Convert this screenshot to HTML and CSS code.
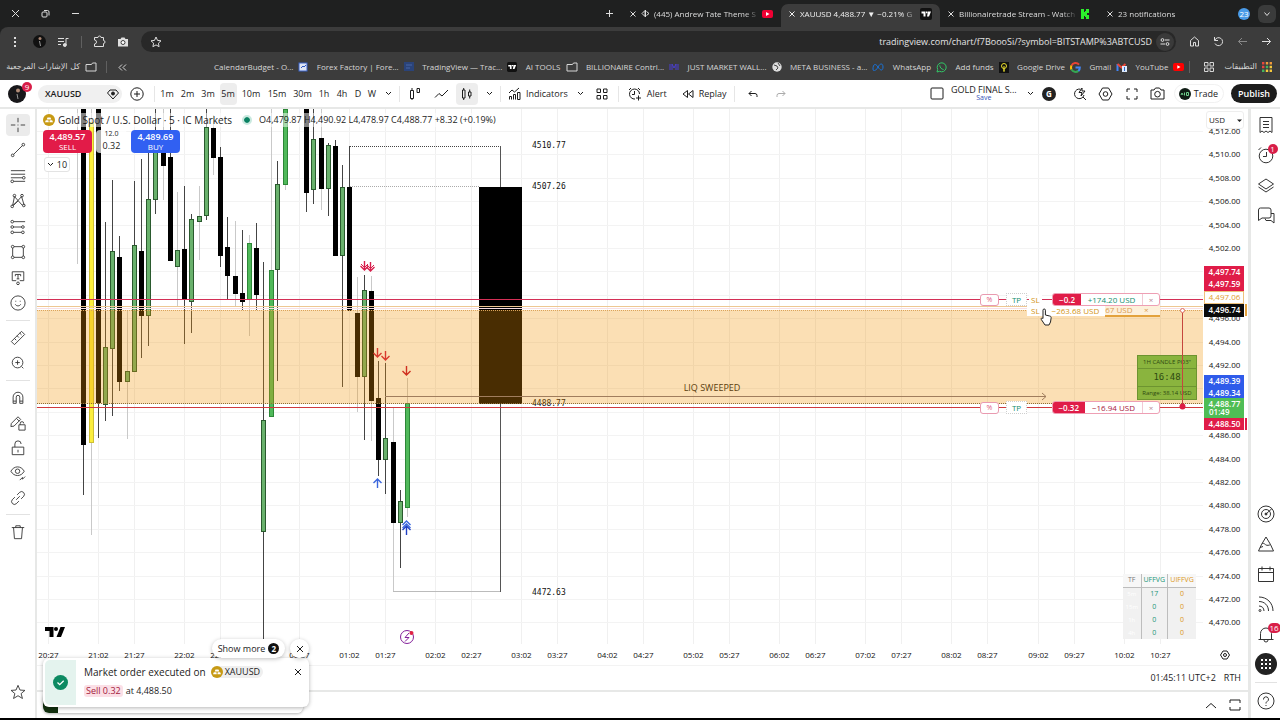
FILE: index.html
```html
<!DOCTYPE html>
<html lang="en">
<head>
<meta charset="utf-8">
<title>XAUUSD 4,488.77 ▼ −0.21% GOLD FINAL</title>
<link rel="stylesheet" href="styles.css">
</head>
<body>
<header class="browser">
  <div class="tabstrip">
    <div class="window-controls">
      <button aria-label="Close window"><svg width="9" height="9" viewBox="0 0 9 9"><path d="M1 1l7 7M8 1l-7 7"/></svg></button>
      <button aria-label="Restore window"><svg width="9" height="9" viewBox="0 0 9 9"><rect x="1" y="3" width="5" height="5" rx="1"/><path d="M3 1.500h3.500a1.500 1.500 0 0 1 1.500 1.500v3.500"/></svg></button>
      <button aria-label="Minimise window"><svg width="9" height="9" viewBox="0 0 9 9"><path d="M1 4.500h7"/></svg></button>
    </div>
    <button class="newtab" aria-label="New tab"><svg width="9" height="9" viewBox="0 0 9 9"><path d="M4.500 1v7M1 4.500h7"/></svg></button>
    <div class="tab">
      <button aria-label="Close tab"><svg width="8" height="8" viewBox="0 0 8 8"><path d="M1.500 1.500l5 5M6.500 1.500l-5 5"/></svg></button>
      <svg width="9" height="9" viewBox="0 0 9 9"><path d="M1 4.500l3-3v6zM5.500 2.500l2.500 2-2.500 2M4.500 1v7"/></svg>
      <span class="tab-title">(445) Andrew Tate Theme S</span>
      <svg width="12" height="10" viewBox="0 0 12 10"><rect x="1" y="1" width="11" height="8" rx="2" fill="#f00033" stroke="none"/><path d="M5 3l3.500 2L5 7z" fill="#fff" stroke="none"/></svg>
    </div>
    <div class="tab active">
      <button aria-label="Close tab"><svg width="8" height="8" viewBox="0 0 8 8"><path d="M1.500 1.500l5 5M6.500 1.500l-5 5"/></svg></button>
      <span class="tab-title">XAUUSD 4,488.77 ▼ −0.21% G</span>
      <svg width="12" height="12" viewBox="0 0 12 12"><rect width="12" height="12" rx="2" fill="#111" stroke="none"/><path d="M1.500 3.500h4v5h-2v-3h-2zM8 3.500h3l-2 5h-2zM6 3.500h1.500v1.700H6z" fill="#fff" stroke="none"/></svg>
    </div>
    <div class="tab">
      <button aria-label="Close tab"><svg width="8" height="8" viewBox="0 0 8 8"><path d="M1.500 1.500l5 5M6.500 1.500l-5 5"/></svg></button>
      <span class="tab-title">Billionairetrade Stream - Watch</span>
      <svg width="12" height="10" viewBox="0 0 12 10"><path d="M2 0h3v3h1V2h1V0h3v4H8v2h2v4H7V8H6V7H5v3H2z" fill="#2bf02b" stroke="none"/></svg>
    </div>
    <div class="tab">
      <button aria-label="Close tab"><svg width="8" height="8" viewBox="0 0 8 8"><path d="M1.500 1.500l5 5M6.500 1.500l-5 5"/></svg></button>
      <span class="tab-title">23 notifications</span>
      <span class="count">23</span>
    </div>
    <button class="tabsearch" aria-label="Search tabs"><svg width="8" height="8" viewBox="0 0 8 8"><path d="M1.500 2.500l2.500 3 2.500-3"/></svg></button>
  </div>

  <div class="navbar">
    <button class="u24" aria-label="Menu"><svg width="4" height="12" viewBox="0 0 4 12"><path d="M1 1h2v2H1zM1 5h2v2H1zM1 9h2v2H1z" fill="#ddd" stroke="none"/></svg></button>
    <button class="u24" aria-label="Profile"><svg width="13" height="13" viewBox="0 0 13 13"><circle cx="6.500" cy="6.500" r="6.500" fill="#111" stroke="none"/><circle cx="7" cy="3.500" r="1.500" fill="#a98572" stroke="none"/><path d="M6.500 6l1 5" stroke="#999"/></svg></button>
    <button class="u24" aria-label="Media"><svg width="12" height="12" viewBox="0 0 12 12"><path d="M1 2.500h6M1 5.500h6M1 8.500h3M9 9V2.500h2.500"/><circle cx="7.800" cy="9" r="1.500" fill="#ddd"/></svg></button>
    <i class="vsep"></i>
    <button class="u24" aria-label="Extensions"><svg width="13" height="13" viewBox="0 0 13 13"><path d="M1.500 2.500h3.500a1.500 1.500 0 0 1 3 0h2.500v3a1.500 1.500 0 0 1 0 3v3h-9v-2.500a2 2 0 0 0 0-4z"/></svg></button>
    <button class="u24" aria-label="Screenshot"><svg width="12" height="10" viewBox="0 0 12 10"><path d="M1 2h2.500l1-1.500h3l1 1.500H11v7.500H1z" fill="#e0e0e0" stroke="none"/><circle cx="6" cy="5.500" r="2" stroke="#3c3c3c" fill="#fff"/></svg></button>
    <div class="address">
      <button aria-label="Bookmark"><svg width="12" height="12" viewBox="0 0 12 12"><path d="M6 1l1.500 3.400 3.500.4-2.600 2.400.7 3.500L6 8.900l-3.100 1.800.7-3.500L1 4.800l3.500-.4z"/></svg></button>
      <input type="text" aria-label="Address" value="tradingview.com/chart/f7BoooSi/?symbol=BITSTAMP%3ABTCUSD">
      <button class="site" aria-label="Site settings"><svg width="10" height="10" viewBox="0 0 10 10"><circle cx="2.500" cy="3" r="1.400"/><path d="M5 3h4.500M.5 7H5"/><circle cx="7.500" cy="7" r="1.400"/></svg></button>
    </div>
    <button class="u24" aria-label="Home"><svg width="11" height="11" viewBox="0 0 11 11"><path d="M1.500 10V4.500l4-3.500 4 3.500V10h-3V6.500h-2V10z"/></svg></button>
    <button class="u24" aria-label="Reload"><svg width="11" height="11" viewBox="0 0 11 11"><path d="M1.500 1v3.500H5M1.800 4.300A4 4 0 1 1 2 7.500"/></svg></button>
    <button class="u24 dim" aria-label="Back"><svg width="11" height="11" viewBox="0 0 11 11"><path d="M10 5.500H1.500M5 2L1.500 5.500 5 9"/></svg></button>
    <button class="u24" aria-label="Forward"><svg width="11" height="11" viewBox="0 0 11 11"><path d="M1 5.500h8.500M6 2l3.500 3.500L6 9"/></svg></button>
  </div>

  <nav class="bookmarks">
    <a href="#" class="all-bookmarks" lang="ar" dir="rtl"><svg width="12" height="10" viewBox="0 0 12 10"><path d="M1 9h10V1H7.500L6.500 2.500H1z"/></svg>كل الإشارات المرجعية</a>
    <i class="vsep"></i>
    <button class="more" aria-label="More bookmarks"><svg width="9" height="7" viewBox="0 0 9 7"><path d="M4 .5l-3 3 3 3M8 .5l-3 3 3 3"/></svg></button>
    <div class="bookmark-list">
      <a href="#">CalendarBudget - O...<svg width="10" height="10" viewBox="0 0 10 10"><rect x="1" y="1" width="8" height="8" fill="#dfe6f5" stroke="#3a63c8"/><path d="M3 6l2-2 1 1 2-2" stroke="#2b56c0"/></svg></a>
      <a href="#">Forex Factory | Fore...<svg width="10" height="10" viewBox="0 0 10 10"><rect width="10" height="9" fill="#2a4379" stroke="none"/><path d="M2 3h6M2 6h4" stroke="#4967a5"/></svg></a>
      <a href="#">TradingView — Trac...<svg width="10" height="10" viewBox="0 0 12 12"><rect width="12" height="12" rx="2" fill="#111" stroke="none"/><path d="M1.500 3.500h4v5h-2v-3h-2zM8 3.500h3l-2 5h-2zM6 3.500h1.500v1.700H6z" fill="#fff" stroke="none"/></svg></a>
      <a href="#">AI TOOLS<svg width="12" height="10" viewBox="0 0 12 10"><path d="M1 9h10V1H7.500L6.500 2.500H1z"/></svg></a>
      <a href="#">BILLIONAIRE Contrl...<svg width="10" height="8" viewBox="0 0 10 8"><path d="M1 1v6M3 7V1l2 4 2-4v6M9 1v6" stroke="#4a3fd0"/></svg></a>
      <a href="#">JUST MARKET WALL...<svg width="10" height="10" viewBox="0 0 10 10"><circle cx="5" cy="5" r="4.700" fill="#ddd" stroke="none"/><path d="M2 3l3 1 1 2-2 2M6 1l2 3" stroke="#444"/></svg></a>
      <a href="#">META BUSINESS - a...<svg width="12" height="8" viewBox="0 0 12 8"><path d="M1 6C1 1 3.500 0 6 4s5 4 5 0S8 0 6 4 1 9 1 6z" stroke="#1a73d9"/></svg></a>
      <a href="#">WhatsApp<svg width="11" height="11" viewBox="0 0 11 11"><path d="M1 10l.7-2.600A4.500 4.500 0 1 1 3.600 9.300z" stroke="#32c666" /><path d="M3.800 3.300c0 2.200 1.700 4 3.800 4.200" stroke="#32c666"/></svg></a>
      <a href="#">Add funds<svg width="10" height="11" viewBox="0 0 10 11"><rect width="10" height="11" fill="#111" stroke="none"/><circle cx="5" cy="4" r="2.500" stroke="#e8dc2c"/><path d="M5 4v6M4 8h2" stroke="#e8dc2c"/></svg></a>
      <a href="#">Google Drive<svg width="11" height="11" viewBox="0 0 11 11"><path d="M9 2.600A4.500 4.500 0 0 0 1.500 3.600" stroke="#ea4335" stroke-width="2"/><path d="M1.500 3.500a4.500 4.500 0 0 0 0 4" stroke="#fbbc05" stroke-width="2"/><path d="M1.600 7.500a4.500 4.500 0 0 0 6.800 1.400" stroke="#34a853" stroke-width="2"/><path d="M8.400 8.900A4.500 4.500 0 0 0 9.800 5.500H5.500" stroke="#4285f4" stroke-width="2"/></svg></a>
      <a href="#">Gmail<svg width="11" height="10" viewBox="0 0 11 10"><path d="M1.500 9V2" stroke="#4285f4" stroke-width="2"/><path d="M1.500 2l4 3.500 4-3.500" stroke="#ea4335" stroke-width="2"/><rect x="6" y="4" width="5" height="6" fill="#dce9fb" stroke="none"/><path d="M8.500 5v4" stroke="#2b66c8"/></svg></a>
      <a href="#">YouTube<svg width="11" height="8" viewBox="0 0 11 8"><rect width="11" height="8" rx="2" fill="#f00" stroke="none"/><path d="M4.300 2.200L7.500 4 4.300 5.800z" fill="#fff" stroke="none"/></svg></a>
    </div>
    <i class="vsep"></i>
    <button class="u24" aria-label="Tab groups"><svg width="10" height="10" viewBox="0 0 10 10"><path d="M.5.500h3.500V4H.5zM6 .5h3.500V4H6zM.5 6h3.500v3.500H.5zM6 6h3.500v3.500H6z"/></svg></button>
    <a href="#" class="apps" lang="ar">التطبيقات<svg width="10" height="10" viewBox="0 0 10 10" stroke="none"><path d="M0 0h2.400v2.400H0zM0 3.800h2.400v2.400H0z" fill="#e8473c" stroke="none"/><path d="M3.800 0h2.400v2.400H3.800zM7.600 0H10v2.400H7.600z" fill="#ef9a3b" stroke="none"/><path d="M3.800 3.800h2.400v2.400H3.800zM0 7.600h2.400V10H0z" fill="#43b45c" stroke="none"/><path d="M7.600 3.800H10v2.400H7.600zM3.800 7.600h2.400V10H3.800zM7.600 7.600H10V10H7.600z" fill="#f5c93d" stroke="none"/></svg></a>
  </nav>
</header>

<div class="toolbar">
  <button class="account" aria-label="Account, 9 messages"><svg width="18" height="18" viewBox="0 0 18 18"><circle cx="9" cy="9" r="9" fill="#18171a" stroke="none"/><circle cx="10" cy="5.500" r="2" fill="#b38c78" stroke="none"/><path d="M9 9l1 5" stroke="#999"/></svg><span class="badge">9</span></button>
  <button class="symbol"><b>XAUUSD</b><svg width="12" height="12" viewBox="0 0 12 12"><path d="M3 2h6l2.500 3L6 11 .5 5z"/><circle cx="6" cy="5.500" r="1.500" fill="#222"/></svg></button>
  <button class="u30" aria-label="Compare"><svg width="14" height="14" viewBox="0 0 14 14"><circle cx="7" cy="7" r="6.200"/><path d="M7 4v6M4 7h6"/></svg></button>
  <i class="sep"></i>
  <button class="u20">1m</button><button class="u21">2m</button><button class="u20">3m</button><button class="u20 on"><span>5m</span></button><button class="u26">10m</button><button class="u26">15m</button><button class="u25">30m</button><button class="u18">1h</button><button class="u18">4h</button><button class="u14">D</button><button class="u14">W</button>
  <button class="u18" aria-label="Intervals"><svg width="7" height="5" viewBox="0 0 7 5"><path d="M1 1l2.500 2.500L6 1"/></svg></button>
  <i class="sep"></i>
  <button class="u26" aria-label="Bar count"><svg width="12" height="14" viewBox="0 0 12 14"><path d="M1.500 3.500h3v8h-3zM3 1v2.500M3 11.500V13M8 1.500h2.500v4H8z"/></svg></button>
  <button class="u26" aria-label="Line chart"><svg width="15" height="10" viewBox="0 0 15 10"><path d="M1 8.500l4-4 3 2.500 6-6"/></svg></button>
  <button class="u26 on" aria-label="Candles"><span><svg width="12" height="14" viewBox="0 0 12 14"><path d="M1.500 3h2.500v8H1.500zM2.700 1v2M2.700 11v2M7.500 5h2.500v4H7.500zM8.700 2.500V5M8.700 9v2.500"/></svg></span></button>
  <button class="u18" aria-label="Chart types"><svg width="7" height="5" viewBox="0 0 7 5"><path d="M1 1l2.500 2.500L6 1"/></svg></button>
  <i class="sep"></i>
  <button class="labelled ind"><svg width="13" height="13" viewBox="0 0 13 13"><path d="M1.500 12.500v-3h2v3M5.500 12.500v-5h2v5M9.500 12.500v-7h2.500v7zM1 6l3-3 2.500 2L11 1"/></svg>Indicators</button>
  <button class="u25" aria-label="Favorites"><svg width="7" height="5" viewBox="0 0 7 5"><path d="M1 1l2.500 2.500L6 1"/></svg></button>
  <button class="u18" aria-label="Templates"><svg width="12" height="12" viewBox="0 0 12 12"><path d="M1 1h3.500v3.500H1zM7.500 1H11v3.500H7.500zM1 7.500h3.500V11H1zM7.500 7.500H11V11H7.500z"/></svg></button>
  <i class="sep wide"></i>
  <button class="labelled"><svg width="14" height="14" viewBox="0 0 14 14"><path d="M11.500 7A5 5 0 1 0 7 12M6.500 4v3.500H4M1 3l2-2M10 1l2 2M10.500 8.500v5M8 11h5"/></svg>Alert</button>
  <button class="labelled replay"><svg width="12" height="10" viewBox="0 0 12 10"><path d="M5.500 1.500v7L1 5zM11 1.500v7L6.500 5z"/></svg>Replay</button>
  <i class="sep wide"></i>
  <button class="u28" aria-label="Undo"><svg width="10" height="8" viewBox="0 0 10 8"><path d="M3.500 1L1 3.500 3.500 6M1 3.500h6a2 2 0 0 1 2 2V7"/></svg></button>
  <button class="u28 faded" aria-label="Redo"><svg width="10" height="8" viewBox="0 0 10 8"><path d="M6.500 1L9 3.500 6.500 6M9 3.500H3a2 2 0 0 0-2 2V7"/></svg></button>
  <div class="grow"></div>
  <button class="u20" aria-label="Layout"><svg width="14" height="13" viewBox="0 0 14 13"><rect x="1" y="1" width="12" height="11" rx="1"/></svg></button>
  <button class="layout-name"><span>GOLD FINAL S...</span><small>Save</small></button>
  <button class="u20" aria-label="Layouts"><svg width="7" height="5" viewBox="0 0 7 5"><path d="M1 1l2.500 2.500L6 1"/></svg></button>
  <span class="gcircle">G</span>
  <button class="u26" aria-label="Quick search"><svg width="14" height="14" viewBox="0 0 14 14"><path d="M7.500 2.200A4.800 4.800 0 1 0 11 8M10 10l3 3M9 1L6 5.500h3L8 9l4-5H9z"/></svg></button>
  <button class="u26" aria-label="Settings"><svg width="15" height="14" viewBox="0 0 15 14"><path d="M4.500 1h6L14 7l-3.500 6h-6L1 7z"/><circle cx="7.500" cy="7" r="2.300"/></svg></button>
  <button class="u26" aria-label="Fullscreen"><svg width="12" height="12" viewBox="0 0 12 12"><path d="M1 4V1h3M8 1h3v3M11 8v3H8M4 11H1V8"/></svg></button>
  <button class="u25" aria-label="Snapshot"><svg width="15" height="13" viewBox="0 0 15 13"><path d="M1 3h3l1.500-2h4L11 3h3v9H1z"/><circle cx="7.500" cy="7.200" r="2.800"/></svg></button>
  <button class="trade"><svg width="12" height="12" viewBox="0 0 12 12"><circle cx="6" cy="6" r="6" fill="#101d15" stroke="none"/><path d="M2 7l1-2 1 2M5.500 4.500v3M7.500 4.500h2v3h-2z" stroke="#6fd08c"/></svg>Trade</button>
  <button class="publish">Publish</button>
</div>

<div class="workspace">
  <aside class="tools">
    <div class="group g8">
      <button class="on" aria-label="Cross"><svg viewBox="0 0 18 18"><path d="M9 1v5M9 12v5M1 9h5M12 9h5M8.500 9h1"/></svg></button>
      <button aria-label="Trend line"><svg viewBox="0 0 18 18"><path d="M4 14L14 4"/><circle cx="3" cy="15" r="1.500"/><circle cx="15" cy="3" r="1.500"/></svg></button>
      <button aria-label="Fib"><svg viewBox="0 0 18 18"><path d="M1 3h16M1 7h16M1 11h13M4 15h13"/><circle cx="15.500" cy="11" r="1.500"/><circle cx="2.500" cy="15" r="1.500"/></svg></button>
      <button aria-label="Patterns"><svg viewBox="0 0 18 18"><path d="M3 14L5 4l9 10M4 14l9-10 3 10M3 14l6-5"/><circle cx="2.500" cy="15" r="1.500"/><circle cx="5" cy="3" r="1.500"/><circle cx="13.500" cy="3" r="1.500"/><circle cx="15.500" cy="14" r="1.500"/></svg></button>
      <button aria-label="Forecast"><svg viewBox="0 0 18 18"><path d="M4 3h13M4 9h9M4 15h9"/><circle cx="2.500" cy="3" r="1.500"/><circle cx="2.500" cy="9" r="1.500"/><circle cx="2.500" cy="15" r="1.500"/><circle cx="14.500" cy="9" r="1.500"/><circle cx="14.500" cy="15" r="1.500"/></svg></button>
      <button aria-label="Shapes"><svg viewBox="0 0 18 18"><path d="M4.500 3h9M4.500 15h9M3 4.500v9M15 4.500v9"/><circle cx="3" cy="3" r="1.500"/><circle cx="15" cy="3" r="1.500"/><circle cx="3" cy="15" r="1.500"/><circle cx="15" cy="15" r="1.500"/></svg></button>
      <button aria-label="Text"><svg viewBox="0 0 18 18"><path d="M7 12H2.500V2h13v10H11M6 7V5h6v2M9 5v5M7.500 10h3"/><circle cx="9" cy="15" r="1.500"/></svg></button>
      <button aria-label="Emoji"><svg viewBox="0 0 18 18"><circle cx="9" cy="9" r="8"/><path d="M6 10.500c1 2.300 5 2.300 6 0M6.500 6.500v1M11.500 6.500v1"/></svg></button>
    </div>
    <hr>
    <div class="group g2">
      <button aria-label="Measure"><svg viewBox="0 0 18 18"><path d="M1.500 13L13 1.500 16.500 5 5 16.500zM5 9.500l2 2M8 6.500l2 2M11 3.500l2 2"/></svg></button>
      <button aria-label="Zoom"><svg viewBox="0 0 18 18"><circle cx="8.500" cy="8.500" r="6"/><path d="M13 13l2 2M8.500 6v5M6 8.500h5"/></svg></button>
    </div>
    <hr>
    <div class="group g5">
      <button aria-label="Magnet"><svg viewBox="0 0 18 18"><path d="M3.500 15V8a5.500 5.500 0 0 1 11 0v7h-3.500V8a2 2 0 0 0-4 0v7zM3.500 12.500H7M11 12.500h3.500"/></svg></button>
      <button aria-label="Lock drawing mode"><svg viewBox="0 0 18 18"><path d="M1 13l.5-3.500L9 2l3 3-7.500 7.500zM7.500 4l3 3M10 11h7v6h-7zM11.500 11V9.500a2 2 0 0 1 4 0"/></svg></button>
      <button aria-label="Lock all"><svg viewBox="0 0 18 18"><path d="M2.500 8h13v8.500h-13zM5.500 8V4.500a3.500 3.500 0 0 1 7 0M9 11v3"/></svg></button>
      <button aria-label="Hide all"><svg viewBox="0 0 18 18"><path d="M1 7c3.500-6.500 11.500-6.500 15 0-3.500 6.500-11.500 6.500-15 0zM11 17l3-3v2l3-3"/><circle cx="8.500" cy="7" r="2.500"/></svg></button>
      <button aria-label="Link"><svg viewBox="0 0 18 18"><path d="M7 11l4-4M8 5.500l3-3a3.200 3.200 0 0 1 4.500 4.500L12.500 10M10 12.500l-3 3A3.200 3.200 0 0 1 2.500 11L5.500 8"/></svg></button>
    </div>
    <hr>
    <div class="group g1">
      <button aria-label="Remove"><svg viewBox="0 0 18 18"><path d="M2 4h14M6.500 4V2h5v2M4 4l1 12.500h8L14 4"/></svg></button>
    </div>
    <div class="group g1 last">
      <button aria-label="Favourite tools"><svg viewBox="0 0 18 18"><path d="M9 1.500l2.200 5.300 5.600.4-4.300 3.600 1.500 5.500L9 13.200 4 16.300l1.500-5.500L1.200 7.200l5.600-.4z"/></svg></button>
    </div>
  </aside>

  <main class="center">
    <section class="chart-panel">
      <div class="chart-row">
        <div class="plot">
          <svg class="canvas" id="plot" role="img" aria-label="Gold spot price chart"></svg>
          <div class="legend">
            <svg width="12" height="12" viewBox="0 0 12 12"><circle cx="6" cy="6" r="6" fill="#c79a14"/><path d="M4.500 3.500h3l.8 2H3.700zM2.800 6.300h2.600l.4 2H2zM6.800 6.300h2.400l.8 2H6.400z" fill="#fff"/></svg>
            <h1>Gold Spot / U.S. Dollar · 5 · IC Markets</h1>
            <i class="live"></i>
            <p>O4,479.87 H4,490.92 L4,478.97 C4,488.77 +8.32 (+0.19%)</p>
          </div>
          <div class="deal">
            <button class="sell"><b>4,489.57</b>SELL</button>
            <div class="qty"><small>12.0</small><span>0.32</span></div>
            <button class="buy"><b>4,489.69</b>BUY</button>
          </div>
          <button class="collapse"><svg width="7" height="5" viewBox="0 0 7 5"><path d="M1 1l2.500 2.500L6 1"/></svg>10</button>

          <div class="order second"><span class="sl">SL</span><span class="loss">−263.68 USD</span><span class="under">67 USD</span><span class="under">×</span></div>
          <div class="order first">
            <button class="pct">%</button><button class="tp">TP</button><span class="sl">SL</span>
            <div class="pos"><b>−0.2</b><span class="gain">+174.20 USD</span><button aria-label="Close position">×</button></div>
          </div>
          <div class="order third">
            <button class="pct">%</button><button class="tp">TP</button>
            <div class="pos"><b>−0.32</b><span class="neg">−16.94 USD</span><button aria-label="Close position">×</button></div>
          </div>
          <div class="po3"><span>1H CANDLE PO3"</span><strong>16:48</strong><span>Range: 38.14 USD</span></div>
          <svg class="bracket" width="9" height="102" viewBox="0 0 9 102"><path d="M4.500 5v92" stroke="#c5463d"/><circle cx="4.500" cy="2.500" r="2" fill="#fff" stroke="#dc6f63"/><circle cx="4.500" cy="98.500" r="3" fill="#dd1e45"/></svg>
          <svg class="cursor" width="12" height="18" viewBox="0 0 12 18"><path d="M3 10.500V2.200a1.200 1.200 0 0 1 2.400 0V7l4.300 1c1.200.3 1.600 1 1.400 2.200L10.500 14 9 17H5L1.300 11.500c-.6-1.200.6-2 1.700-1z" fill="#fff" stroke="#222"/></svg>
          <table class="ffvg">
            <tr><th>TF</th><th class="g">UFFVG</th><th class="o">UIFFVG</th></tr>
            <tr><td class="tf">5m</td><td class="g">17</td><td class="o">0</td></tr>
            <tr><td class="tf">15m</td><td class="g">0</td><td class="o">0</td></tr>
            <tr><td class="tf">1h</td><td class="g">0</td><td class="o">0</td></tr>
            <tr><td class="tf">4h</td><td class="g">0</td><td class="o">0</td></tr>
          </table>
          <svg class="tvlogo" width="20" height="10" viewBox="0 0 20 10"><path d="M0 0h8.500v10H4.500V4H0zM15.500 0H20l-4 10h-4.500z"/><circle cx="11" cy="2" r="2"/></svg>
        </div>
        <div class="price-axis">
          <svg class="canvas" id="prices" role="img" aria-label="Price axis"></svg>
          <select aria-label="Currency"><option>USD</option></select>
          <svg class="caret" width="5" height="4" viewBox="0 0 5 4"><path d="M0 .5h5L2.500 3z" fill="#222" stroke="none"/></svg>
        </div>
      </div>
      <div class="time-row">
        <svg class="canvas" id="times" role="img" aria-label="Time axis"></svg>
        <button aria-label="Axis settings"><svg width="10" height="10" viewBox="0 0 10 10"><path d="M3 1h4l2.500 4L7 9H3L.5 5z"/><circle cx="5" cy="5" r="1.500"/></svg></button>
      </div>
      <div class="status"><span>01:45:11 UTC+2</span><span>RTH</span></div>
    </section>
    <footer class="bottom">
      <button aria-label="Open panel"><svg width="12" height="7" viewBox="0 0 12 7"><path d="M1 6l5-4.500L11 6"/></svg></button>
      <button aria-label="Maximise panel"><svg width="12" height="12" viewBox="0 0 12 12"><path d="M1 4V1h3M8 1h3v3M11 8v3H8M4 11H1V8M4 1h4M4 11h4" /></svg></button>
    </footer>
    <div class="toast-wrap">
      <div class="toast-actions"><button class="show">Show more <b>2</b></button><button class="dismiss" aria-label="Dismiss all"><svg width="8" height="8" viewBox="0 0 8 8"><path d="M1 1l6 6M7 1L1 7"/></svg></button></div>
      <div class="stacked"></div>
      <div class="toast">
        <div class="mark"><svg width="15" height="15" viewBox="0 0 15 15"><circle cx="7.500" cy="7.500" r="7.500" fill="#0d8a62"/><path d="M4.500 7.500l2.200 2.200 4-4" stroke="#fff" stroke-width="1.300" fill="none"/></svg></div>
        <div class="msg">
          <p>Market order executed on <span class="chip"><svg width="12" height="12" viewBox="0 0 12 12"><circle cx="6" cy="6" r="6" fill="#c79a14"/><path d="M4.500 3.500h3l.8 2H3.700zM2.800 6.300h2.600l.4 2H2zM6.800 6.300h2.400l.8 2H6.400z" fill="#fff"/></svg>XAUUSD</span></p>
          <p class="detail"><span class="side">Sell 0.32</span> at 4,488.50</p>
        </div>
        <button aria-label="Close notification"><svg width="8" height="8" viewBox="0 0 8 8"><path d="M1 1l6 6M7 1L1 7"/></svg></button>
      </div>
    </div>
  </main>

  <aside class="widgets">
    <button aria-label="Watchlist"><svg viewBox="0 0 18 18"><path d="M3 1.500h12v15l-2-1.500-2 1.500L9 15l-2 1.500L5 15l-2 1.500zM6 5.500h6M6 8.500h6M6 11.500h6"/></svg></button>
    <button aria-label="Alerts"><svg viewBox="0 0 18 18"><circle cx="9" cy="10" r="6.800"/><path d="M9.500 6v4.500H6M1.500 4L4 1.500M14 1.500L16.500 4"/></svg><span class="badge">1</span></button>
    <button aria-label="Object tree"><svg viewBox="0 0 18 18"><path d="M1.500 8L9 3l7.500 5L9 13zM1.500 11L9 16l7.500-5"/></svg></button>
    <button aria-label="Chats"><svg viewBox="0 0 18 18"><path d="M1.500 14.500V4a2 2 0 0 1 2-2h8.500a2 2 0 0 1 2 2v6a2 2 0 0 1-2 2H5zM8 12.500l1 2h5l3 2.500V7.500h-3"/></svg></button>
    <div class="grow"></div>
    <button aria-label="Screener"><svg viewBox="0 0 18 18"><circle cx="9" cy="9" r="8"/><circle cx="9" cy="9" r="4.500"/><circle cx="9" cy="9" r="1" fill="#222"/><path d="M9 9l6-5.500"/></svg></button>
    <button aria-label="Pine"><svg viewBox="0 0 18 18"><path d="M9 2l4.500 7.500L16.500 16h-15l3-6.500zM4.500 9.500c2-2.500 3.500 0 4.500.5s3 .5 4.500-.5M3 12.500l3-1"/></svg></button>
    <button aria-label="Calendar"><svg viewBox="0 0 18 18"><path d="M1.500 3.500h15v13h-15zM1.500 7.500h15M5 1.500v4M13 1.500v4"/></svg></button>
    <button aria-label="News"><svg viewBox="0 0 18 18"><path d="M2 2c8 0 14 6 14 14M2 6.500c5.500 0 9.500 4 9.500 9.500M2 11c3 0 5 2 5 5"/><circle cx="3" cy="15.500" r="1"/></svg></button>
    <button aria-label="Notifications"><svg viewBox="0 0 18 18"><path d="M1.500 14.500h15M3.500 14.500V8.500a5.500 5.500 0 0 1 11 0v6M7 15a2 2 0 0 0 4 0"/></svg><span class="badge">16</span></button>
    <button class="products" aria-label="Products"><svg viewBox="0 0 22 22"><circle cx="11" cy="11" r="11" fill="#222" stroke="none"/><path d="M5.500 5.500h3v3h-3zM9.500 5.500h3v3h-3zM13.500 5.500h3v3h-3zM5.500 9.500h3v3h-3zM9.500 9.500h3v3h-3zM13.500 9.500h3v3h-3zM5.500 13.500h3v3h-3zM9.500 13.500h3v3h-3zM13.500 13.500h3v3h-3z" fill="#fff" stroke="#222"/></svg></button>
    <hr>
    <button aria-label="Help"><svg viewBox="0 0 18 18"><circle cx="9" cy="9" r="8"/><path d="M6.500 7.500a2.500 2.500 0 1 1 3.700 2C9.300 10 9 10.500 9 11.500M9 13v1"/></svg></button>
  </aside>
</div>
<script src="chart.js"></script>
</body>
</html>
```
FILE: styles.css
```css
* { box-sizing: border-box; }
body {
  margin: 0;
  min-height: 100vh;
  display: flex;
  flex-direction: column;
  font-family: "Open Sans", "Noto Sans", sans-serif;
  font-size: 9px;
  line-height: 12px;
  color: #1c1c1c;
  background: #e7e8e7;
  border-bottom: 2px solid #000;
}
h1, p { margin: 0; font: inherit; }
button, input, select { font: inherit; color: inherit; border: 0; padding: 0; background: none; }
button { display: flex; align-items: center; justify-content: center; flex: none; white-space: nowrap; }
a { color: inherit; text-decoration: none; }
svg { flex: none; fill: none; stroke: currentColor; }
hr { border: 0; height: 1px; background: #e2e2e2; }
.grow { flex: 1; }
.u14 { width: 14px; }
.u18 { width: 18px; }
.u20 { width: 20px; }
.u21 { width: 21px; }
.u24 { width: 24px; }
.u25 { width: 25px; }
.u26 { width: 26px; }
.u28 { width: 28px; }
.u30 { width: 30px; }

/* Browser frame */
.browser { background: #1f2020; color: #dedede; }
.tabstrip { display: flex; align-items: stretch; height: 27px; padding-right: 4px; }
.window-controls { display: flex; flex: 1; }
.window-controls button { width: 30px; }
.newtab { width: 26px; }
.tab { width: 159px; display: flex; align-items: center; gap: 4px; padding: 0 8px 0 7px; flex: none; }
.tab.active { background: #3c3c3c; border-radius: 7px 7px 0 0; margin-top: 4px; padding-bottom: 4px; color: #f0f0f0; }
.tab-title { flex: 1; white-space: nowrap; font-size: 8px; mask-image: linear-gradient(to right, #000 88%, rgba(0, 0, 0, .2)); }
.count { width: 12px; height: 12px; border-radius: 6px; background: #4a9be8; color: #fff; font-size: 8px; line-height: 12px; text-align: center; }
.tabsearch { width: 18px; height: 18px; border-radius: 6px; background: #3a3b3b; margin-top: 5px; }
.navbar { display: flex; align-items: center; height: 27px; padding: 2px 2px 0 3px; background: #3c3c3c; border-radius: 8px 0 0 0; }
.vsep { width: 1px; height: 12px; background: #606060; flex: none; }
.navbar .vsep { margin: 0 5px 0 6px; }
.address { flex: 1; display: flex; align-items: center; height: 21px; margin: 0 6px; padding: 0 2px 0 9px; border-radius: 11px; background: #282828; }
.address input { flex: 1; min-width: 0; text-align: right; color: #e4e4e4; padding-right: 4px; }
.site { width: 18px; height: 18px; border-radius: 9px; background: #3a3a3a; }
.dim { color: #888; }
.bookmarks { display: flex; align-items: center; height: 26px; padding: 0 8px 0 10px; background: #3c3c3c; font-size: 8px; color: #d6d6d6; white-space: nowrap; }
.bookmarks a { display: flex; align-items: center; gap: 5px; }
.all-bookmarks, .apps { font-family: "DejaVu Sans", sans-serif; }
.all-bookmarks { width: 87px; }
.bookmarks .vsep { margin: 0 9px; }
.more { width: 12px; margin-right: 86px; }
.bookmark-list { display: flex; flex: 1; justify-content: space-between; }
.bookmark-list + .vsep { margin: 0 7px 0 4px; }
.bookmarks .u24 { margin-right: 4px; }

/* Chart toolbar */
.toolbar { display: flex; align-items: stretch; height: 27px; padding: 0 3px 0 8px; background: #fff; }
.badge { position: absolute; min-width: 10px; height: 10px; padding: 0 2px; border-radius: 5px; background: #d81e48; color: #fff; font-size: 8px; line-height: 10px; text-align: center; }
.account { position: relative; width: 18px; }
.account .badge { left: 14px; top: 2px; }
.symbol { width: 84px; height: 18px; margin: 5px 0 0 12px; padding: 0 3px 0 7px; border-radius: 9px; background: #f0f0f0; justify-content: space-between; }
.symbol b { font-weight: 600; }
.sep { width: 1px; height: 16px; margin: 6px 2px 0; background: #e6e6e6; flex: none; }
.sep.wide { margin: 6px 9px 0 7px; }
.replay + .sep.wide { margin-right: 4px; }
.on span { display: flex; align-items: center; justify-content: center; width: 100%; height: 22px; border-radius: 4px; background: #ededed; }
.on.u20 span { width: 17px; }
.on.u26 span { width: 22px; }
.labelled { gap: 5px; }
.ind { margin-left: 5px; }
.replay { margin-left: 15px; }
.faded { color: #aaa; }
.layout-name { flex-direction: column; width: 74px; line-height: 9px; }
.layout-name small { font-size: 7px; line-height: 8px; color: #3450b8; }
.gcircle { width: 14px; height: 14px; margin: 7px 11px 0 1px; border-radius: 7px; background: #222; color: #fff; font-weight: 700; font-size: 8px; line-height: 14px; text-align: center; }
.trade { gap: 3px; padding: 0 5px 0 4px; margin: 4px 7px 4px 4px; border-radius: 10px; border: 1px solid #f1f1f1; }
.publish { height: 19px; margin-top: 4px; padding: 0 7px; border-radius: 10px; background: #1d1d1d; color: #fff; font-weight: 600; }

/* Workspace */
.workspace { flex: 1; display: flex; gap: 2px; padding-top: 2px; }
.tools { width: 35px; background: #fff; display: flex; flex-direction: column; align-items: center; padding: 3px 0 13px; color: #333; }
.tools svg { width: 16px; height: 16px; }
.widgets svg { width: 18px; height: 18px; }
.tools hr { width: 24px; margin: 4px 0; flex: none; }
.group { display: grid; grid-auto-rows: 1fr; }
.group button { width: 24px; }
.g8 { height: 204px; }
.g2 { height: 51px; }
.g5 { height: 125px; }
.g1 { height: 26px; }
.last { margin-top: auto; }
.tools .on { background: #ebebeb; border-radius: 4px; height: 22px; align-self: center; }
.widgets { width: 29px; background: #fff; display: flex; flex-direction: column; align-items: center; padding: 1px 0 2px; color: #333; }
.widgets button { position: relative; width: 28px; height: 30px; }
.widgets .badge { left: 16px; top: 4px; }
.widgets .products svg { width: 22px; height: 22px; }
.widgets hr { width: 22px; margin: 3px 0; flex: none; }

.center { position: relative; flex: 1; display: flex; flex-direction: column; gap: 2px; min-width: 0; margin-right: 1px; }
.chart-panel { flex: 1; display: flex; flex-direction: column; background: #fff; }
.chart-row { flex: 1; display: flex; }
.plot { position: relative; flex: 1; overflow: hidden; }
.price-axis { position: relative; width: 45px; }
.canvas { position: absolute; left: 0; top: 0; width: 100%; height: 100%; stroke: none; }
.canvas text { fill: #111; font-size: 8px; }
.canvas .mono { font-family: "DejaVu Sans Mono", monospace; font-size: 8px; }
.canvas .note { font-size: 9px; }
.canvas .mid { text-anchor: middle; }
.canvas .tag { fill: #fff; font-weight: 600; }
.canvas .orange { fill: #e0a030; font-weight: 400; }
.price-axis select { position: absolute; left: 3px; top: 2px; width: 38px; height: 18px; padding-left: 2px; appearance: none; font-size: 8px; color: #222; background: #fff; border: 1px solid #eee; border-radius: 3px; }
.caret { position: absolute; left: 34px; top: 10px; pointer-events: none; }
.legend { position: absolute; left: 6px; top: 4px; display: flex; align-items: center; height: 14px; background: rgba(255, 255, 255, .5); white-space: nowrap; }
.legend svg, .tvlogo { stroke: none; }
.legend h1 { margin-left: 3px; font-size: 10px; }
.live { width: 6px; height: 6px; margin: 0 9px 0 12px; border-radius: 3px; background: #0a8263; outline: 2px solid #c9e9df; }
.deal { position: absolute; left: 6px; top: 21px; display: flex; gap: 4px; }
.deal button { width: 49px; height: 23px; flex-direction: column; border-radius: 4px; color: #fff; font-size: 8px; line-height: 9px; }
.deal b { font-size: 9px; line-height: 10px; font-weight: 600; }
.sell { background: #e21b48; }
.buy { background: #3160f2; }
.qty { width: 31px; display: flex; flex-direction: column; align-items: center; background: rgba(255, 255, 255, .7); border-radius: 4px; }
.qty small { font-size: 7px; line-height: 8px; }
.qty span { line-height: 15px; }
.collapse { position: absolute; left: 7px; top: 48px; width: 26px; height: 15px; gap: 3px; background: #fff; border: 1px solid #e3e3e3; border-radius: 3px; }
.tvlogo { position: absolute; left: 8px; top: 518px; fill: #000; }

.order { position: absolute; right: 43px; display: flex; align-items: center; height: 13px; width: 180px; font-size: 8px; line-height: 11px; white-space: nowrap; }
.first { top: 184px; }
.second { top: 195px; }
.third { top: 292px; }
.pct { width: 19px; height: 12px; border: 1px solid #e99ab0; border-radius: 3px; background: #fff; color: #e05a7c; font-size: 7px; }
.tp { width: 21px; height: 13px; margin-left: 7px; background: #fff; border: 1px dotted #cfcfcf; color: #148f70; }
.order .sl { background: #fff; color: #d39414; }
.first .sl { margin-left: 2px; padding: 0 2px; }
.pos { display: flex; margin-left: auto; height: 13px; border: 1px solid #ee9fb4; border-radius: 3px; background: #fff; overflow: hidden; }
.pos b { padding: 0 6px; background: #e01c48; color: #fff; font-weight: 600; }
.pos span { width: 62px; text-align: center; border-right: 1px solid #f2c9d4; }
.third .pos span { width: 58px; }
.pos button { width: 16px; color: #b78a95; }
.pos .gain { color: #148f70; }
.pos .neg { color: #a8183c; }
.second { padding-left: 47px; }
.second .sl { padding: 0 12px 0 4px; }
.second .loss { padding-right: 6px; background: #fff; color: #d39414; }
.second .under { flex: 1; text-align: center; background: #fdf0da; color: #d99a50; border-bottom: 2px solid #e3a23c; }

.po3 { position: absolute; right: 6px; top: 246px; width: 60px; display: flex; flex-direction: column; text-align: center; background: #8ab43e; border: 1px solid #6d9430; color: #2f4a12; font-size: 6px; white-space: nowrap; }
.po3 strong { font: 9px/17px "DejaVu Sans Mono", monospace; border: 1px solid #6d9430; border-width: 1px 0; }
.po3 span { line-height: 12px; }
.bracket { position: absolute; right: 16px; top: 199px; stroke: none; }
.cursor { position: absolute; right: 151px; top: 199px; }
.ffvg { position: absolute; right: 7px; top: 465px; width: 73px; border-collapse: collapse; font-size: 7px; line-height: 12px; text-align: center; background: #f1f1f1; }
.ffvg th, .ffvg td { padding: 0; font-weight: 400; height: 13px; border-left: 1px solid #bdbdbd; }
.ffvg th { border-bottom: 1px solid #bdbdbd; background: #f7f7f7; color: #777; }
.ffvg th:first-child, .ffvg td:first-child { border-left: 0; width: 18px; }
.ffvg .tf { color: #fff; font-size: 6px; }
.ffvg .g { color: #1a9678; }
.ffvg .o { color: #dc9722; }

.time-row { position: relative; height: 22px; border-bottom: 1px solid #f3f3f3; overflow: hidden; }
.time-row button { position: absolute; right: 18px; top: 6px; }
.status { display: flex; justify-content: flex-end; gap: 8px; height: 24px; padding: 6px 7px 0; }
.bottom { height: 26px; background: #fff; display: flex; justify-content: flex-end; gap: 12px; padding: 0 7px; }

.toast-wrap { position: absolute; left: 6px; bottom: 5px; width: 266px; }
.toast-actions { display: flex; justify-content: flex-end; gap: 5px; position: relative; z-index: 2; }
.show, .dismiss { height: 19px; background: #fff; border-radius: 10px; box-shadow: 0 1px 4px rgba(0, 0, 0, .25); }
.show { width: 73px; gap: 3px; }
.show b { width: 11px; height: 11px; border-radius: 6px; background: #111; color: #fff; font-size: 8px; line-height: 11px; }
.dismiss { width: 19px; }
.stacked { position: absolute; left: 0; right: 6px; bottom: 0; height: 20px; border-radius: 6px; background: linear-gradient(to right, #12300f 15px, #fff 15px); box-shadow: 0 1px 3px rgba(0, 0, 0, .3); }
.toast { position: relative; display: flex; height: 49px; margin-bottom: 6px; padding: 2px; background: #fff; border-radius: 6px; box-shadow: 0 1px 4px rgba(0, 0, 0, .3); }
.mark { width: 31px; display: flex; align-items: center; justify-content: center; background: #e4f3ee; border-radius: 5px 0 0 5px; }
.mark svg, .chip svg { stroke: none; }
.msg { flex: 1; padding: 6px 0 0 8px; font-size: 10px; }
.msg p { display: flex; align-items: center; gap: 5px; }
.chip { display: flex; align-items: center; gap: 2px; padding-right: 3px; border-radius: 6px; background: #efefef; font-size: 9px; }
.msg .detail { margin-top: 7px; font-size: 9px; gap: 3px; }
.side { padding: 0 2px; border-radius: 3px; background: #fbdfe6; color: #a31a3c; }
.toast > button { width: 18px; height: 24px; }
```
FILE: chart.js
```js
const NS = "http://www.w3.org/2000/svg";
const plot = document.getElementById("plot");
const prices = document.getElementById("prices");
const times = document.getElementById("times");

function layer(svg, x, y) {
  return add(svg, "g", { transform: `translate(${-x} ${-y})` });
}
function add(parent, name, attrs, text) {
  const el = document.createElementNS(NS, name);
  for (const key in attrs) el.setAttribute(key, attrs[key]);
  if (text) el.textContent = text;
  parent.appendChild(el);
  return el;
}

const g = layer(plot, 37, 109);
const rect = (x, y, w, h, fill) => add(g, "rect", { x, y, width: w, height: h, fill });
const path = (d, stroke, extra) => add(g, "path", { d, stroke, fill: "none", ...extra });

// Grid
const columns = [48, 98, 134, 184, 220, 299, 349, 385, 435, 471, 521, 557, 607, 643, 693, 729, 779, 815, 865, 901, 951, 987, 1038, 1074, 1124, 1160];
columns.forEach(x => rect(x, 109, 1, 536, "#f0f0f0"));
for (let i = 0; i < 22; i++) rect(37, Math.round(131 + i * 23.4), 1166, 1, "#f3f3f3");

// x, wick top, wick bottom, body top, body bottom, colour, faint wick
const candles = [
  [77, 109, 264, 0, 0, "k", 1],
  [83, 109, 495, 109, 445, "k"], [91, 109, 535, 122, 443, "y", 1], [98, 109, 438, 109, 403, "k"],
  [105, 222, 421, 347, 405, "g"], [112, 180, 416, 251, 349, "g"], [119, 236, 391, 257, 382, "k"],
  [127, 311, 439, 371, 382, "g", 1], [134, 181, 372, 245, 372, "g"], [141, 159, 358, 251, 316, "k"],
  [148, 140, 346, 199, 316, "g"], [155, 109, 214, 140, 200, "g"], [163, 109, 200, 135, 166, "k", 1],
  [170, 109, 261, 157, 261, "k"], [177, 192, 307, 250, 267, "g", 1], [184, 186, 344, 249, 300, "k"],
  [191, 214, 333, 219, 302, "g"], [199, 186, 260, 216, 222, "g", 1], [206, 109, 220, 127, 216, "g"],
  [213, 115, 175, 128, 158, "k", 1], [220, 147, 267, 157, 256, "k"], [227, 217, 300, 247, 276, "k"],
  [235, 221, 307, 276, 294, "k", 1], [242, 230, 310, 293, 302, "k"], [249, 235, 336, 243, 300, "b", 1],
  [256, 223, 310, 248, 295, "k"], [263, 262, 639, 420, 532, "g"], [271, 109, 270, 270, 417, "b", 1],
  [277, 161, 381, 184, 270, "g"], [285, 109, 190, 109, 185, "b", 1], [306, 109, 212, 109, 193, "k"],
  [313, 109, 204, 139, 190, "g"], [321, 109, 210, 138, 189, "k", 1], [328, 143, 216, 145, 189, "g"],
  [335, 140, 256, 146, 256, "k"], [342, 165, 387, 187, 256, "g"], [349, 146, 187, 187, 311, "k"],
  [357, 277, 412, 313, 377, "k", 1], [364, 275, 440, 290, 377, "g"], [371, 276, 441, 291, 401, "k", 1],
  [378, 361, 476, 398, 460, "k"], [385, 363, 494, 438, 460, "g"], [393, 407, 592, 442, 523, "k", 1],
  [400, 490, 568, 501, 523, "g"], [407, 378, 517, 403, 508, "b", 1]
];
const fills = { k: "#000", g: "#69b16c", b: "#50b95a", y: "#fbee3e" };
const edges = { k: "#000", g: "#2a5a2e", b: "#2d8738", y: "#cfc034" };
candles.forEach(([x, top, low, open, close, tone, faint]) => {
  rect(x, top, 1, low - top, faint ? "#c9c9c9" : "#444");
  if (close) {
    rect(x - 2, open, 5, close - open, edges[tone]);
    if (tone !== "k") rect(x - 1, open + 1, 3, close - open - 2, fills[tone]);
  }
});

// Higher-timeframe candle
path("M350 146.5H500.5", "#444", { "stroke-dasharray": "1 1" });
path("M350 186.5H479", "#aaa", { "stroke-dasharray": "1 1" });
path("M500.5 146V187M500.5 404V592", "#555");
path("M393 591.500H500", "#bbb");
rect(479, 187, 43, 217, "#000");

// Order levels and supply zone
rect(37, 306, 1166, 1, "#eec792");
rect(37, 308, 1166, 1, "#f8dfe4");
path("M385 396.500H1046M1042 393l4 3.500-4 3.500", "#7d7383");
add(g, "text", { x: 712, y: 391, class: "mid note" }, "LIQ SWEEPED");
add(g, "text", { x: 532, y: 406, class: "mono" }, "4488.77");
rect(37, 310, 1166, 94, "rgba(243,150,5,.3)");
path("M37 310.500H1203", "#dba45a", { "stroke-dasharray": "1 1" });
path("M37 403.500H1203", "#8d6f3a", { "stroke-dasharray": "1 1" });
rect(37, 299, 1166, 1, "#d42f56");
rect(37, 407, 1166, 1, "#cf3a3c");
[[148, "4510.77"], [189, "4507.26"], [595, "4472.63"]].forEach(([y, t]) => add(g, "text", { x: 532, y, class: "mono" }, t));

// Signal arrows
const bold = { "stroke-width": 1.4 };
const down = (x, y, c) => path(`M${x}.5 ${y}v9m-4 -4l4 4 4-4`, c, bold);
const up = (x, y, c) => path(`M${x}.5 ${y}v-9m-4 4l4-4 4 4`, c, bold);
down(364, 261, "#d81f4c"); down(370, 262, "#d81f4c");
path("M361 264l3.500 3.500 3.500-3.500M367 265l3.500 3.500 3.500-3.500", "#d81f4c");
down(377, 348, "#d83a2e"); down(385, 351, "#d83a2e"); down(406, 366, "#cf3020");
up(377, 488, "#3a66dd"); up(406, 535, "#1f3fc4");
path("M402.500 528l4-4 4 4M402.500 525l4-4 4 4", "#3a66dd", bold);

// Event marker
add(g, "circle", { cx: 407, cy: 637, r: 6.5, stroke: "#84209a", fill: "#fff" });
path("M409 633l-4 4.500h4l-4 4", "#84209a");
add(g, "circle", { cx: 411.5, cy: 633, r: 2, fill: "#e02244" });

// Price axis
const p = layer(prices, 1203, 109);
for (let i = 0; i < 22; i++) {
  const value = 4512 - i * 2;
  if ([4500, 4498, 4490, 4488].includes(value)) continue;
  add(p, "text", { x: 1224.5, y: Math.round(134 + i * 23.4), class: "mid" }, "4," + (value - 4000) + ".00");
}
const tag = (y, h, fill, text, cls) => {
  add(p, "rect", { x: 1204, y, width: 40, height: h, fill });
  add(p, "text", { x: 1224.5, y: y + 9, class: "mid tag " + (cls || "") }, text);
};
tag(266, 12, "#e01c48", "4,497.74");
tag(278, 13, "#e01c48", "4,497.59");
tag(291, 13, "#fff", "4,497.06", "orange");
add(p, "rect", { x: 1204.5, y: 291.5, width: 39, height: 12, fill: "none", stroke: "#efc27c" });
tag(304, 13, "#0b0b0b", "4,496.74");
tag(375, 12, "#2f5bea", "4,489.39");
tag(387, 11, "#2f5bea", "4,489.34");
tag(398, 20, "#4fbd55", "4,488.77");
add(p, "text", { x: 1209, y: 415, class: "tag" }, "01:49");
tag(418, 12, "#e01c48", "4,488.50");
add(p, "rect", { x: 1245, y: 304, width: 2, height: 12, fill: "#e3a23c" });
add(p, "rect", { x: 1245, y: 418, width: 2, height: 12, fill: "#e01c48" });

// Time axis
const t = layer(times, 37, 645);
const labels = ["20:27", "21:02", "21:27", "22:02", "22:27", "00:27", "01:02", "01:27", "02:02", "02:27", "03:02", "03:27", "04:02", "04:27", "05:02", "05:27", "06:02", "06:27", "07:02", "07:27", "08:02", "08:27", "09:02", "09:27", "10:02", "10:27"];
labels.forEach((label, i) => add(t, "text", { x: columns[i] + 0.5, y: 659, class: "mid" }, label));
```
